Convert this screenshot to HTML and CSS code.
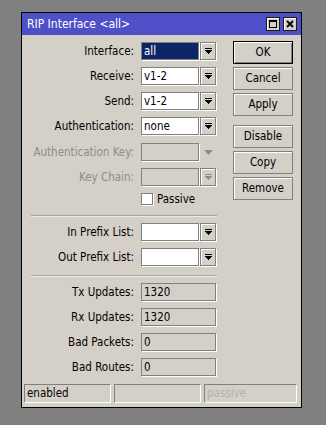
FILE: index.html
```html
<!DOCTYPE html>
<html>
<head>
<meta charset="utf-8">
<link rel="stylesheet" href="styles.css">
</head>
<body>
<div class="window">
  <div class="titlebar">
    <span class="title">RIP Interface &lt;all&gt;</span>
    <div class="tb-buttons">
      <span class="tb-btn"><svg width="8" height="8" viewBox="0 0 8 8" shape-rendering="crispEdges"><rect x="0" y="0" width="8" height="2" fill="#000"/><rect x="0.5" y="0.5" width="7" height="7" fill="none" stroke="#000"/></svg></span>
      <span class="tb-btn"><svg width="8" height="8" viewBox="0 0 8 8"><path d="M1 1L7 7M7 1L1 7" stroke="#000" stroke-width="1.8"/></svg></span>
    </div>
  </div>
  <div class="body">
    <div class="main">
      <div class="form">
        <div class="row">
          <span class="lbl">Interface:</span>
          <div class="combo"><div class="field sel">all</div><div class="dd"><svg class="arr" width="7" height="7" viewBox="0 0 7 7" shape-rendering="crispEdges"><rect x="0" y="0" width="7" height="1" fill="#000"/><polygon points="0,2 7,2 3.5,6" fill="#000"/></svg></div></div>
        </div>
        <div class="row">
          <span class="lbl">Receive:</span>
          <div class="combo"><div class="field">v1-2</div><div class="dd"><svg class="arr" width="7" height="7" viewBox="0 0 7 7" shape-rendering="crispEdges"><rect x="0" y="0" width="7" height="1" fill="#000"/><polygon points="0,2 7,2 3.5,6" fill="#000"/></svg></div></div>
        </div>
        <div class="row">
          <span class="lbl">Send:</span>
          <div class="combo"><div class="field">v1-2</div><div class="dd"><svg class="arr" width="7" height="7" viewBox="0 0 7 7" shape-rendering="crispEdges"><rect x="0" y="0" width="7" height="1" fill="#000"/><polygon points="0,2 7,2 3.5,6" fill="#000"/></svg></div></div>
        </div>
        <div class="row">
          <span class="lbl">Authentication:</span>
          <div class="combo"><div class="field">none</div><div class="dd"><svg class="arr" width="7" height="7" viewBox="0 0 7 7" shape-rendering="crispEdges"><rect x="0" y="0" width="7" height="1" fill="#000"/><polygon points="0,2 7,2 3.5,6" fill="#000"/></svg></div></div>
        </div>
        <div class="row row-shift">
          <span class="lbl dis">Authentication Key:</span>
          <div class="combo"><div class="field off"></div><div class="dd bare"><svg width="9" height="5" viewBox="0 0 9 5"><polygon points="0,0 9,0 4.5,5" fill="#8c8c8c"/></svg></div></div>
        </div>
        <div class="row">
          <span class="lbl dis">Key Chain:</span>
          <div class="combo"><div class="field off"></div><div class="dd"><svg class="arr" width="7" height="7" viewBox="0 0 7 7" shape-rendering="crispEdges"><rect x="0" y="0" width="7" height="1" fill="#8c8c8c"/><polygon points="0,2 7,2 3.5,6" fill="#8c8c8c"/></svg></div></div>
        </div>
        <div class="row check-row">
          <span class="lbl"></span>
          <div class="check"><span class="box"></span><span>Passive</span></div>
        </div>
        <div class="sep sep1"></div>
        <div class="row">
          <span class="lbl">In Prefix List:</span>
          <div class="combo"><div class="field"></div><div class="dd"><svg class="arr" width="7" height="7" viewBox="0 0 7 7" shape-rendering="crispEdges"><rect x="0" y="0" width="7" height="1" fill="#000"/><polygon points="0,2 7,2 3.5,6" fill="#000"/></svg></div></div>
        </div>
        <div class="row">
          <span class="lbl">Out Prefix List:</span>
          <div class="combo"><div class="field"></div><div class="dd"><svg class="arr" width="7" height="7" viewBox="0 0 7 7" shape-rendering="crispEdges"><rect x="0" y="0" width="7" height="1" fill="#000"/><polygon points="0,2 7,2 3.5,6" fill="#000"/></svg></div></div>
        </div>
        <div class="sep sep2"></div>
        <div class="row">
          <span class="lbl">Tx Updates:</span>
          <div class="field ro">1320</div>
        </div>
        <div class="row">
          <span class="lbl">Rx Updates:</span>
          <div class="field ro">1320</div>
        </div>
        <div class="row">
          <span class="lbl">Bad Packets:</span>
          <div class="field ro">0</div>
        </div>
        <div class="row">
          <span class="lbl">Bad Routes:</span>
          <div class="field ro">0</div>
        </div>
      </div>
      <div class="buttons">
        <div class="btn default">OK</div>
        <div class="btn">Cancel</div>
        <div class="btn">Apply</div>
        <div class="btn gap">Disable</div>
        <div class="btn">Copy</div>
        <div class="btn">Remove</div>
      </div>
    </div>
    <div class="statusbar">
      <div class="panel p1">enabled</div>
      <div class="panel p2"></div>
      <div class="panel p3 faint">passive</div>
    </div>
  </div>
</div>
</body>
</html>
```
FILE: styles.css
```css
html, body {
  margin: 0;
  padding: 0;
  background: #808080;
}
body {
  font-family: "DejaVu Sans Condensed", "DejaVu Sans", sans-serif;
  font-stretch: condensed;
  font-size: 11.5px;
  color: #000;
}
.window {
  box-sizing: border-box;
  width: 281px;
  margin: 12px 0 0 21px;
  border: 1px solid #000;
  background: #d4d0c8;
}
.titlebar {
  height: 22px;
  background: #4f4fc8;
  display: flex;
  align-items: center;
  justify-content: space-between;
  padding: 0 4px 0 5px;
}
.title {
  color: #fff;
  font-size: 12px;
  line-height: 22px;
}
.tb-buttons {
  display: flex;
  gap: 3px;
}
.tb-btn {
  box-sizing: border-box;
  width: 14px;
  height: 14px;
  background: #d4d0c8;
  border: 1px solid #1a1a1a;
  box-shadow: inset 1px 1px 0 #fff;
  display: flex;
  align-items: center;
  justify-content: center;
}
.body {
  padding-top: 6px;
}
.main {
  display: flex;
  padding-left: 8px;
}
.form {
  width: 187px;
  padding-top: 1px;
  display: flex;
  flex-direction: column;
  gap: 7px;
}
.row {
  display: grid;
  grid-template-columns: 104px 76px;
  column-gap: 7px;
  height: 18px;
  align-items: center;
}
.row-shift {
  margin-top: 1px;
}
.lbl {
  text-align: right;
  white-space: nowrap;
  line-height: 18px;
}
.lbl.dis {
  color: #8c8c8c;
}
.combo {
  display: flex;
  gap: 1px;
  height: 18px;
}
.field {
  box-sizing: border-box;
  width: 58px;
  height: 18px;
  border: 1px solid #808080;
  box-shadow: 1px 1px 0 #fff;
  background: #fff;
  padding-left: 2px;
  line-height: 16px;
  white-space: nowrap;
  overflow: hidden;
}
.field.sel {
  background: #0c2468;
  color: #fff;
}
.field.off {
  background: #d4d0c8;
}
.field.ro {
  width: 75px;
  background: #d4d0c8;
}
.dd {
  box-sizing: border-box;
  width: 16px;
  height: 18px;
  border: 1px solid #808080;
  box-shadow: 1px 1px 0 #fff, inset 1px 1px 0 #fff;
  display: flex;
  align-items: center;
  justify-content: center;
}
.dd.bare {
  border: none;
  box-shadow: none;
}
.arr {
  display: block;
  margin-top: 1px;
}
.check-row {
  height: 12px;
}
.check {
  display: flex;
  align-items: center;
  gap: 4px;
  height: 12px;
  line-height: 12px;
}
.box {
  box-sizing: border-box;
  width: 12px;
  height: 12px;
  background: #fff;
  border: 1px solid #808080;
  box-shadow: 1px 1px 0 #fff;
}
.sep {
  height: 0;
  margin-left: 1px;
  border-top: 1px solid #a9a59d;
  border-bottom: 1px solid #ecebe7;
}
.sep1 {
  margin-top: 3px;
  margin-bottom: -1px;
}
.sep2 {
  margin-top: 2px;
  margin-bottom: -1px;
}
.buttons {
  margin-left: 16px;
  display: flex;
  flex-direction: column;
  gap: 3px;
}
.btn {
  box-sizing: border-box;
  width: 60px;
  height: 23px;
  border: 1px solid #808080;
  box-shadow: inset 1px 1px 0 #fff;
  text-align: center;
  line-height: 21px;
}
.btn.default {
  border-color: #000;
  box-shadow: inset 1px 1px 0 #fff, inset -1px -1px 0 #808080;
}
.btn.gap {
  margin-top: 6px;
}
.statusbar {
  display: flex;
  gap: 3px;
  margin-top: 8px;
  padding: 0 4px 4px 2px;
}
.panel {
  box-sizing: border-box;
  height: 19px;
  border: 1px solid;
  border-color: #808080 #fff #fff #808080;
  padding-left: 2px;
  line-height: 17px;
  white-space: nowrap;
}
.p1 { width: 87px; }
.p2 { width: 87px; }
.p3 { width: 93px; }
.faint { color: #b4b1aa; }
```
